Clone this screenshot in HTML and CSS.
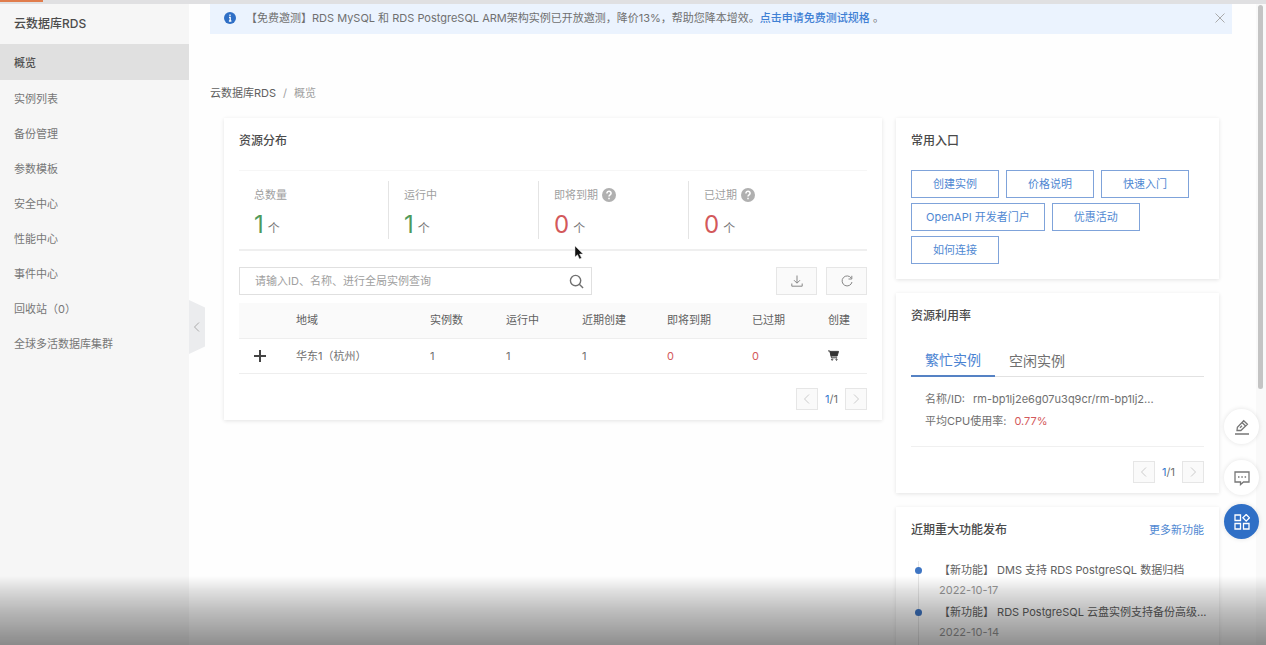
FILE: index.html
```html
<!DOCTYPE html>
<html lang="zh-CN">
<head>
<meta charset="utf-8">
<title>云数据库RDS - 概览</title>
<link rel="stylesheet" href="styles.css">
</head>
<body>
<svg class="sprite" aria-hidden="true">
  <symbol id="left" viewBox="0 0 12 12"><path d="M8 1.5 3.5 6 8 10.5"/></symbol>
  <symbol id="right" viewBox="0 0 12 12"><path d="M4 1.5 8.500 6 4 10.500"/></symbol>
  <symbol id="help" viewBox="0 0 14 14"><circle cx="7" cy="7" r="7" fill="#b0b0b0" stroke="none"/><path d="M4.900 5.500C4.900 2.600 9.300 2.700 9.100 5.400 9 6.800 7 6.800 7 8.400M7 9.700v1.500" stroke="#fff" stroke-width="1.500"/></symbol>
</svg>
<div class="topline"><div class="progress"></div></div>
<div class="layout">
  <aside class="sidebar">
    <h1 class="brand">云数据库RDS</h1>
    <nav class="menu">
      <a class="menu-item active" href="#">概览</a>
      <a class="menu-item" href="#">实例列表</a>
      <a class="menu-item" href="#">备份管理</a>
      <a class="menu-item" href="#">参数模板</a>
      <a class="menu-item" href="#">安全中心</a>
      <a class="menu-item" href="#">性能中心</a>
      <a class="menu-item" href="#">事件中心</a>
      <a class="menu-item" href="#">回收站（0）</a>
      <a class="menu-item" href="#">全球多活数据库集群</a>
    </nav>
    <button class="collapse" aria-label="收起"><svg class="icon"><use href="#left"/></svg></button>
  </aside>
  <main class="main">
    <div class="notice">
      <svg class="notice-icon" viewBox="0 0 12 12"><circle cx="6" cy="6" r="6" fill="#2f6fc6"/><path d="M6 2.500v1.500M5 5.300h1.200v3.500M4.900 9h2.500" stroke="#fff" stroke-width="1.300" fill="none"/></svg>
      <p class="notice-text">【免费邀测】RDS MySQL 和 RDS PostgreSQL ARM架构实例已开放邀测，降价13%，帮助您降本增效。<a class="strong-link" href="#">点击申请免费测试规格</a> 。</p>
      <button class="close" aria-label="关闭"><svg class="icon" viewBox="0 0 12 12"><path d="m1.500 1.500 9 9m0-9-9 9"/></svg></button>
    </div>
    <div class="crumbs"><a class="crumb" href="#">云数据库RDS</a><span>/</span><span>概览</span></div>
    <div class="columns">
      <section class="card resources">
        <h2 class="title">资源分布</h2>
        <div class="stats">
          <div class="stat"><div class="stat-label">总数量</div><div class="stat-value green">1<span class="unit">个</span></div></div>
          <div class="stat"><div class="stat-label">运行中</div><div class="stat-value green">1<span class="unit">个</span></div></div>
          <div class="stat"><div class="stat-label">即将到期<svg class="help"><use href="#help"/></svg></div><div class="stat-value red">0<span class="unit">个</span></div></div>
          <div class="stat"><div class="stat-label">已过期<svg class="help"><use href="#help"/></svg></div><div class="stat-value red">0<span class="unit">个</span></div></div>
        </div>
        <div class="toolbar">
          <div class="search">
            <input class="search-input" type="text" aria-label="全局实例查询" placeholder="请输入ID、名称、进行全局实例查询">
            <button class="search-button" aria-label="搜索"><svg class="search-icon" viewBox="0 0 16 16"><circle cx="7" cy="7" r="5.500"/><path d="m11 11 4 4"/></svg></button>
          </div>
          <button class="tool" aria-label="下载"><svg class="icon" viewBox="0 0 12 12"><path d="M6 .5v7.500M3 5.200l3 3 3-3M.8 8.500v2.700h10.400V8.500"/></svg></button>
          <button class="tool" aria-label="刷新"><svg class="icon" viewBox="0 0 12 12"><path d="M10.300 3.200A5 5 0 1 0 11 7M10.800.8v3.200H7.500"/></svg></button>
        </div>
        <table class="table">
          <colgroup><col class="c-expand"><col class="c-region"><col class="c-num"><col class="c-num"><col class="c-wide"><col class="c-wide"><col class="c-num"><col></colgroup>
          <thead><tr><th></th><th>地域</th><th>实例数</th><th>运行中</th><th>近期创建</th><th>即将到期</th><th>已过期</th><th>创建</th></tr></thead>
          <tbody><tr>
            <td><button class="plain" aria-label="展开"><svg class="plus" viewBox="0 0 12 12"><path d="M6 0v12M0 6h12"/></svg></button></td>
            <td>华东1（杭州）</td><td>1</td><td>1</td><td>1</td><td class="red">0</td><td class="red">0</td>
            <td><button class="plain" aria-label="创建实例"><svg class="cart" viewBox="0 0 12 12"><path d="M0 1h2l1.800 7.500H10"/><path d="M2.200 1.500H11.500L10 6.600H3.500Z" fill="#333"/><circle cx="4.500" cy="10.500" r=".7"/><circle cx="9.300" cy="10.500" r=".7"/></svg></button></td>
          </tr></tbody>
        </table>
        <div class="pager">
          <button class="page" aria-label="上一页" disabled><svg class="icon"><use href="#left"/></svg></button>
          <span class="page-text"><span class="blue">1</span>/1</span>
          <button class="page" aria-label="下一页" disabled><svg class="icon"><use href="#right"/></svg></button>
        </div>
      </section>
      <div class="side">
        <section class="card">
          <h2 class="title">常用入口</h2>
          <div class="links">
            <a class="entry" href="#">创建实例</a><a class="entry" href="#">价格说明</a><a class="entry" href="#">快速入门</a><a class="entry" href="#">OpenAPI 开发者门户</a><a class="entry" href="#">优惠活动</a><a class="entry" href="#">如何连接</a>
          </div>
        </section>
        <section class="card">
          <h2 class="title">资源利用率</h2>
          <div class="tabs"><button class="tab selected">繁忙实例</button><button class="tab">空闲实例</button></div>
          <dl class="usage">
            <div class="usage-row"><dt>名称/ID:</dt><dd class="value">rm-bp1lj2e6g07u3q9cr/rm-bp1lj2...</dd></div>
            <div class="usage-row"><dt>平均CPU使用率:</dt><dd class="value red">0.77%</dd></div>
          </dl>
          <div class="pager">
            <button class="page" aria-label="上一页" disabled><svg class="icon"><use href="#left"/></svg></button>
            <span class="page-text"><span class="blue">1</span>/1</span>
            <button class="page" aria-label="下一页" disabled><svg class="icon"><use href="#right"/></svg></button>
          </div>
        </section>
        <section class="card">
          <div class="card-head"><h2 class="title">近期重大功能发布</h2><a class="more" href="#">更多新功能</a></div>
          <ul class="news">
            <li class="news-item"><a class="news-title" href="#">【新功能】 DMS 支持 RDS PostgreSQL 数据归档</a><time class="date">2022-10-17</time></li>
            <li class="news-item"><a class="news-title" href="#">【新功能】 RDS PostgreSQL 云盘实例支持备份高级...</a><time class="date">2022-10-14</time></li>
          </ul>
        </section>
      </div>
    </div>
  </main>
</div>
<div class="scrollbar"><div class="thumb"></div></div>
<div class="floats">
  <button class="float" aria-label="编辑"><svg class="float-icon" viewBox="0 0 16 16"><path d="M1 15h14M3 11.500l.4-3.300L9.700 1.700l3.700 3.500-6.500 6.300ZM8 3.500l3.600 3.500M6 8.800l2-2"/></svg></button>
  <button class="float" aria-label="反馈"><svg class="float-icon" viewBox="0 0 16 16"><path d="M1 2h14v10H9.500L6.500 14.500V12H1ZM4 7h1.500M7.300 7h1.500M10.600 7h1.500"/></svg></button>
  <button class="float primary" aria-label="应用"><svg class="float-icon" viewBox="0 0 16 16"><path d="M1 1h5.500v5.500H1ZM1 9.500h5.500V15H1ZM9.500 9.500H15V15H9.500ZM12.200.5l3.300 3.300-3.300 3.300L8.900 3.800Z"/></svg></button>
</div>
<svg class="cursor" viewBox="0 0 9 14"><path d="M1 0v11l2.500-2.300L5.500 13l2-1-2-4H9Z" fill="#111" stroke="#ddd" stroke-width=".5"/></svg>
<div class="shade"></div>
</body>
</html>
```
FILE: styles.css
```css
* { box-sizing: border-box; }
body {
  margin: 0;
  height: 100vh;
  overflow: hidden;
  background: #fefefe;
  color: #707070;
  font: 11px/18px Inter, "Noto Sans CJK SC", sans-serif;
}
h1, h2, p, dl, dd, ul { margin: 0; padding: 0; }
a { color: inherit; text-decoration: none; }
button { font: inherit; color: inherit; border: 0; padding: 0; background: none; }
svg { fill: none; stroke: currentColor; flex: none; }
.sprite { position: absolute; width: 0; height: 0; }
.icon { width: 12px; height: 12px; display: block; }

.topline { height: 4px; background: #e0e0e2; }
.progress { width: 43px; height: 2px; background: #e07c4c; }
.layout { display: flex; height: calc(100vh - 4px); }

.sidebar { position: relative; flex: none; width: 189px; background: #f6f6f6; }
.brand { height: 40px; padding-left: 14px; color: #4c4c4c; font-size: 12px; line-height: 39px; font-weight: 500; }
.menu { display: flex; flex-direction: column; }
.menu-item { height: 35px; padding-left: 14px; line-height: 39px; color: #777; }
.active { height: 36px; background: #e0e0e0; color: #505050; font-weight: 500; }
.collapse {
  position: absolute; left: 100%; top: 296px; width: 16px; height: 54px;
  display: flex; align-items: center; justify-content: center;
  background: #ebecee; color: #aaa;
  clip-path: polygon(0 0, 100% 14%, 100% 86%, 0 100%);
}

.main { flex: 1; min-width: 0; padding: 0 34px 0 21px; }
.notice { display: flex; align-items: center; height: 30px; padding: 0 6px 2px 14px; background: #ebf3fe; }
.notice-icon { width: 12px; height: 12px; stroke: none; }
.notice-text { flex: 1; margin-left: 10px; white-space: nowrap; }
.strong-link { color: #3f80d4; font-weight: 500; }
.close { color: #aaa; }
.crumbs { display: flex; gap: 7px; margin: 50px 0 16px; color: #a0a0a0; }
.crumb { color: #606060; }

.columns { display: grid; grid-template-columns: minmax(0, 1fr) 323px; gap: 14px; align-items: start; padding: 0 13px 0 14px; }
.side { display: grid; gap: 14px; }
.card { min-width: 0; padding: 14px 15px; background: #fff; box-shadow: 0 1px 4px #0000001c; }
.title { color: #4a4a4a; font-size: 12px; line-height: 18px; font-weight: 500; }

.stats { display: grid; grid-template-columns: repeat(4, minmax(0, 150px)); margin-top: 20px; padding: 10px 0 10px; border-top: 1px solid #f6f6f6; border-bottom: 2px solid #efefef; }
.stat { height: 58px; padding: 4px 0 0 15px; border-right: 1px solid #e4e4e4; }
.stat:last-child { border-right: 0; }
.stat-label { display: flex; align-items: center; gap: 4px; height: 20px; color: #a0a0a0; }
.help { width: 14px; height: 14px; }
.stat-value { display: flex; align-items: baseline; gap: 4px; margin-top: 5px; font-size: 24px; line-height: 30px; }
.unit { color: #777; font-size: 12px; }
.green { color: #4f9a5b; }
.red { color: #d3595b; }
.page-text .blue { color: #3478ce; }

.toolbar { display: flex; gap: 9px; margin-top: 16px; }
.search { display: flex; align-items: center; width: 353px; height: 28px; margin-right: auto; padding: 0 7px 0 15px; border: 1px solid #e0e0e0; }
.search-input { flex: 1; min-width: 0; padding: 0; border: 0; outline: 0; background: none; font: inherit; }
.search-input::placeholder { color: #a0a0a0; }
.search-icon { width: 15px; height: 15px; stroke-width: 1.5; display: block; }
.tool { display: flex; align-items: center; justify-content: center; width: 41px; height: 28px; border: 1px solid #e6e6e6; background: #fafafa; color: #888; }

.table { width: 100%; margin-top: 8px; table-layout: fixed; border-collapse: collapse; }
.table th, .table td { height: 35px; padding: 0 0 0 15px; text-align: left; font-weight: 400; white-space: nowrap; border-bottom: 1px solid #eee; }
.table th { background: #fafafa; color: #606060; }
.c-expand { width: 42px; }
.c-region { width: 134px; }
.c-num { width: 76px; }
.c-wide { width: 85px; }
.plain { display: block; }
.plus { width: 12px; height: 12px; stroke: #444; stroke-width: 2; display: block; }
.cart { width: 11px; height: 11px; stroke: #333; display: block; }

.pager { display: flex; align-items: center; justify-content: flex-end; gap: 7px; margin: 14px 0 -4px; }
.page { display: flex; align-items: center; justify-content: center; width: 22px; height: 22px; border: 1px solid #e6e6e6; background: #fafafa; color: #ccc; }

.links { display: flex; flex-wrap: wrap; gap: 5px 7px; margin-top: 20px; padding-bottom: 1px; }
.entry { min-width: 88px; height: 28px; padding: 0 14px; border: 1px solid #7fa3da; color: #5088d2; line-height: 26px; text-align: center; }

.tabs { display: flex; margin-top: 20px; border-bottom: 1px solid #e2e2e2; }
.tab { height: 32px; margin-bottom: -1px; padding: 0 14px; font-size: 14px; line-height: 30px; }
.selected { color: #4a83d2; border-bottom: 2px solid #5582c4; }
.usage { padding: 11px 14px 14px; border-bottom: 1px solid #f0f0f0; }
.usage-row { display: flex; gap: 8px; line-height: 22px; }
.value { white-space: nowrap; }

.card-head { display: flex; align-items: center; justify-content: space-between; }
.more { color: #5088d2; }
.news { margin-top: 22px; list-style: none; }
.news-item { position: relative; height: 42px; margin-left: 7px; padding-left: 20px; border-left: 1px solid #e8e8e8; }
.news-item::before { content: ""; position: absolute; left: -4px; top: 6px; width: 7px; height: 7px; border-radius: 50%; background: #3e75c3; }
.news-title { display: block; white-space: nowrap; color: #606060; line-height: 19px; }
.date { display: block; line-height: 20px; color: #999; }

.scrollbar { position: fixed; z-index: 1; top: 4px; right: 0; bottom: 0; width: 10px; padding: 1px 3px 0 2px; background: #f9f9f9; }
.thumb { height: 60%; border-radius: 3px; background: #c4c4c4; }
.floats { position: fixed; z-index: 2; right: 7px; bottom: 106px; display: grid; gap: 16px; }
.float { display: flex; align-items: center; justify-content: center; width: 35px; height: 35px; border-radius: 50%; background: #fff; color: #777; box-shadow: 0 0 5px #0000001c; }
.primary { margin-top: -7px; background: #2f6fc6; color: #fff; }
.float-icon { width: 16px; height: 16px; stroke-width: 1.3; }
.cursor { position: fixed; z-index: 3; left: 574px; top: 246px; width: 9px; height: 14px; }
.shade { position: fixed; z-index: 4; inset: auto 0 0; height: 69px; background: linear-gradient(#0000, #0000001f 22%, #00000040 50%, #00000070); pointer-events: none; }
```
